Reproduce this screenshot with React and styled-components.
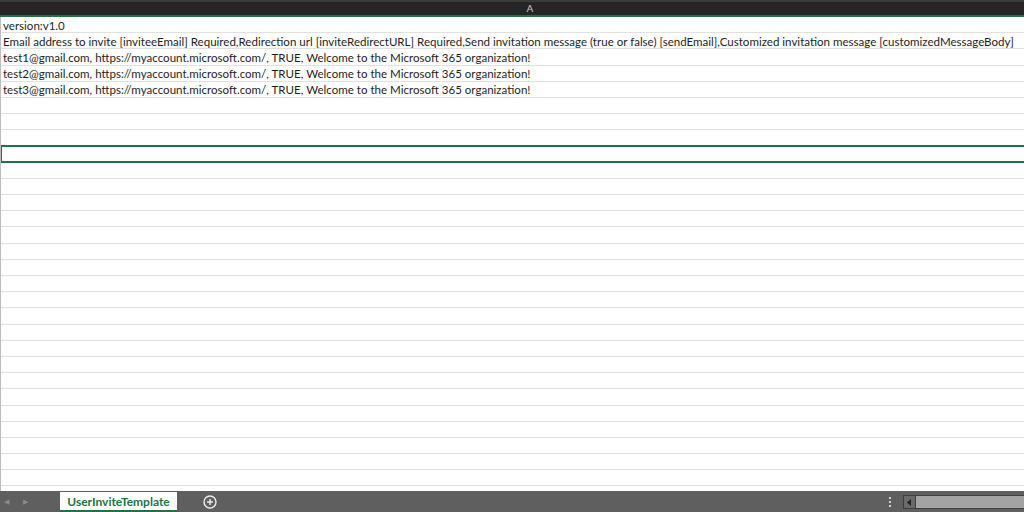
import React from "react";
import styled, { createGlobalStyle } from "styled-components";

const Global = createGlobalStyle`
  html, body { margin: 0; padding: 0; background: #fff; overflow: hidden; }
  #root { width: 1024px; height: 512px; }
`;

const Window = styled.div`
  width: 1024px;
  height: 512px;
  display: flex;
  flex-direction: column;
  overflow: hidden;
  background: #fff;
  font-family: "Lato", "Liberation Sans", sans-serif;
`;

const ColumnHeader = styled.div`
  height: 17px;
  flex: none;
  background: #252525;
  border-top: 2px solid #3b3b3b;
  border-bottom: 2px solid #217346;
  box-sizing: border-box;
  display: flex;
  overflow: hidden;
`;

const HeaderCell = styled.div`
  width: 1060px;
  flex: none;
  text-align: center;
  color: #c8c8c8;
  font-size: 10px;
  line-height: 13px;
`;

const Grid = styled.div`
  flex: 1;
  display: flex;
  flex-direction: column;
  border-left: 1px solid #bdbdbd;
  overflow: hidden;
`;

const Row = styled.div`
  height: 16.2px;
  flex: none;
  box-sizing: border-box;
  border-bottom: 1px solid #e0e0e0;
  position: relative;
  display: flex;
  align-items: center;
  padding-left: 2px;
  padding-top: 1px;
  font-size: 11.55px;
  color: #1e1e1e;
  white-space: nowrap;
`;

const Selection = styled.div`
  position: absolute;
  left: -1px;
  right: -2px;
  top: -2px;
  bottom: -1px;
  border: 2px solid #217346;
  pointer-events: none;
`;

const TabBar = styled.div`
  height: 21px;
  flex: none;
  background: #5f5f5f;
  display: flex;
  align-items: stretch;
`;

const NavArrows = styled.div`
  width: 60px;
  flex: none;
  box-sizing: border-box;
  display: flex;
  align-items: center;
  gap: 14px;
  padding-left: 4px;
  color: #8a8a8a;
  font-size: 7px;
`;

const SheetTab = styled.div`
  margin-top: 1px;
  width: 117px;
  flex: none;
  background: #fff;
  color: #217346;
  font-weight: 700;
  font-size: 12px;
  display: flex;
  align-items: center;
  justify-content: center;
  box-sizing: border-box;
  border-bottom: 2px solid #217346;
`;

const AddButton = styled.div`
  width: 66px;
  flex: none;
  display: flex;
  align-items: center;
  justify-content: center;
`;

const Spacer = styled.div`
  flex: 1;
`;

const Dots = styled.div`
  width: 4px;
  display: flex;
  flex-direction: column;
  justify-content: center;
  gap: 2px;
  margin-right: 10px;
  & > span {
    width: 2px;
    height: 2px;
    background: #d0d0d0;
  }
`;

const ScrollBar = styled.div`
  width: 120px;
  margin: 4px 0 3px;
  display: flex;
  border: 1px solid #3e3e3e;
  border-right: none;
  background: #a3a3a3;
`;

const ScrollBtn = styled.div`
  width: 11px;
  background: #6a6a6a;
  border-right: 1px solid #3e3e3e;
  display: flex;
  align-items: center;
  justify-content: center;
`;

const rows = [
  "version:v1.0",
  "Email address to invite [inviteeEmail] Required,Redirection url [inviteRedirectURL] Required,Send invitation message (true or false) [sendEmail],Customized invitation message [customizedMessageBody]",
  "test1@gmail.com, https://myaccount.microsoft.com/, TRUE, Welcome to the Microsoft 365 organization!",
  "test2@gmail.com, https://myaccount.microsoft.com/, TRUE, Welcome to the Microsoft 365 organization!",
  "test3@gmail.com, https://myaccount.microsoft.com/, TRUE, Welcome to the Microsoft 365 organization!",
];

export default function App() {
  const all = Array.from({ length: 30 }, (_, i) => rows[i] || "");
  return (
    <>
      <Global />
      <Window>
        <ColumnHeader>
          <HeaderCell>A</HeaderCell>
        </ColumnHeader>
        <Grid>
          {all.map((t, i) => (
            <Row key={i}>
              {t}
              {i === 8 && <Selection />}
            </Row>
          ))}
        </Grid>
        <TabBar>
          <NavArrows>
            <span>◀</span>
            <span>▶</span>
          </NavArrows>
          <SheetTab>UserInviteTemplate</SheetTab>
          <AddButton>
            <svg width="14" height="14" viewBox="0 0 14 14">
              <circle cx="7" cy="7" r="6" fill="none" stroke="#eee" strokeWidth="1.4" />
              <path d="M7 4v6M4 7h6" stroke="#eee" strokeWidth="1.4" />
            </svg>
          </AddButton>
          <Spacer />
          <Dots>
            <span />
            <span />
            <span />
          </Dots>
          <ScrollBar>
            <ScrollBtn>
              <svg width="5" height="7" viewBox="0 0 5 7">
                <path d="M4 0L0 3.5L4 7Z" fill="#222" />
              </svg>
            </ScrollBtn>
          </ScrollBar>
        </TabBar>
      </Window>
    </>
  );
}
